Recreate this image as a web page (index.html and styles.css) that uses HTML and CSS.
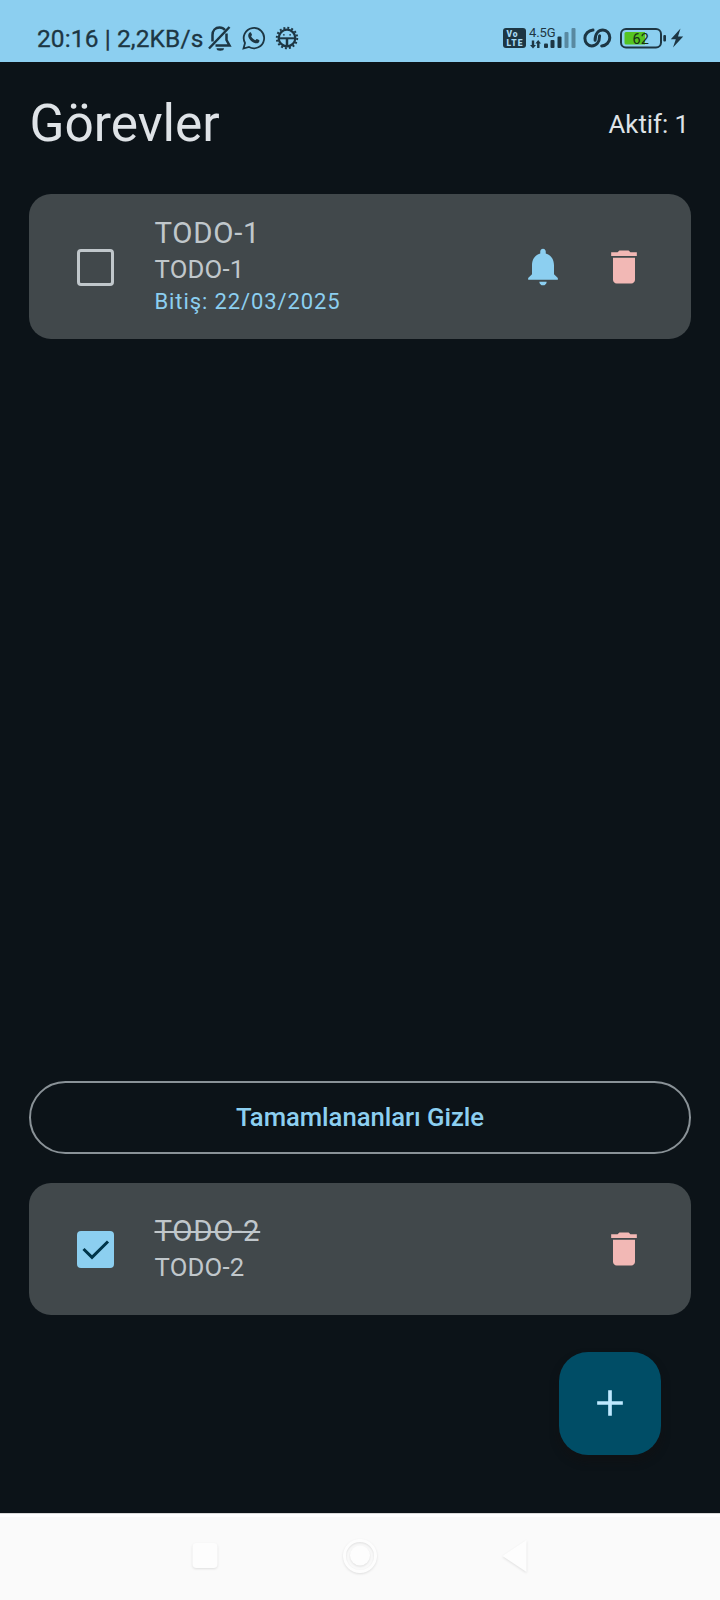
FILE: index.html
```html
<!DOCTYPE html>
<html lang="tr">
<head>
<meta charset="utf-8">
<title>Görevler</title>
<link rel="stylesheet" href="styles.css">
</head>
<body>
<div class="screen">
  <header class="status">
    <span class="clock">20:16 | 2,2KB/s</span>
    <svg class="st-mute" width="26" height="28" viewBox="0 0 26 28" fill="none" stroke="currentColor" stroke-width="2.5">
      <path d="M2 24.500 22.500 3"/>
      <path d="M5.500 17.500V11C5.500 6.500 8.500 3.500 12.500 3.500 15 3.500 16.800 4.500 18 6"/>
      <path d="M19.500 9.500V16l3 5.400H8.500"/>
      <path d="M9.500 24.200h7.500a3.700 2.500 0 0 1-7.500 0z" fill="currentColor" stroke="none"/>
    </svg>
    <svg class="st-wa" width="24" height="24" viewBox="0 0 24 24">
      <path d="M1.500 22.500 3 17a10.200 10.200 0 1 1 4 4z" fill="none" stroke="currentColor" stroke-width="1.800"/>
      <path d="M7.300 6.700c.5-.6 1.500-.7 1.800 0l.9 2c.2.5-.7 1.300-.9 1.600.9 1.900 2.300 3.100 4.300 3.900.4-.3 1-1.500 1.500-1.300l2.200 1.100c.6.3.2 1.900-.4 2.500-1.400 1.300-3.400.9-5.300 0-2.300-1.100-4-3-4.900-5.200-.6-1.700-.3-3.500.8-4.600z" fill="currentColor"/>
    </svg>
    <svg class="st-gear" width="24" height="24" viewBox="0 0 24 24" fill="none" stroke="currentColor">
      <circle cx="12" cy="12" r="8.300" stroke-width="2.200"/>
      <circle cx="12" cy="12" r="10.200" stroke-width="2" stroke-dasharray="2 2.006"/>
      <path d="M4 12.300h16" stroke-width="2"/>
      <path d="M12 13v7" stroke-width="2.500"/>
      <path d="M8 8.800h1.700M14.300 8.800H16" stroke-width="1.200"/>
    </svg>
    <svg class="st-volte" width="23" height="20" viewBox="0 0 23 20">
      <rect width="23" height="20" rx="3" fill="currentColor"/>
      <text x="3.500" y="9" class="volte-text" textLength="11">Vo</text>
      <text x="3.500" y="17.500" class="volte-text" textLength="16">LTE</text>
    </svg>
    <svg class="st-signal" width="49" height="24" viewBox="0 0 49 24" fill="currentColor">
      <text x="0" y="11.500" class="net-text" textLength="26.500">4.5G</text>
      <path d="M5.200 15.500v4.500h1.800l-3 3.500-3-3.500h1.800v-4.500zM10.500 23v-4.500h1.500L9.200 15 6.400 18.500h1.700V23z"/>
      <rect x="15" y="18.500" width="4" height="4.500" rx="1"/>
      <rect x="21.500" y="15" width="4" height="8" rx="1"/>
      <rect x="28.500" y="11.500" width="4" height="11.500" rx="1"/>
      <g opacity=".45"><rect x="35.500" y="7" width="4" height="16" rx="1"/><rect x="42.500" y="3" width="4" height="20" rx="1"/></g>
    </svg>
    <svg class="st-link" width="29" height="20" viewBox="0 0 29 20" fill="none" stroke="currentColor" stroke-width="3" stroke-linecap="round">
      <path d="M10 2C5.500 2.300 1.900 5.800 1.900 10.300 1.900 14.600 4.900 17.900 8.800 17.900 13.200 17.900 16.600 14.500 16.600 7.800"/>
      <path d="M18.700 18C23.200 17.700 26.800 14.200 26.800 9.700 26.800 5.400 23.800 2.100 19.900 2.100 15.500 2.100 12.100 5.500 12.100 12.200"/>
    </svg>
    <svg class="st-battery" width="47" height="21" viewBox="0 0 47 21">
      <rect x="1" y="1" width="40" height="18.500" rx="5" fill="none" stroke="currentColor" stroke-width="2"/>
      <path d="M6 4h19v12.500H6a1.500 1.500 0 0 1-1.500-1.500V5.500A1.500 1.500 0 0 1 6 4z" fill="#55c421"/>
      <rect x="43.300" y="7" width="2.700" height="6.500" rx="1" fill="currentColor"/>
      <text x="12.500" y="15.800" class="battery-text" textLength="16.500">62</text>
    </svg>
    <svg class="st-bolt" width="14" height="20" viewBox="0 0 14 20"><path d="M10.500.5.800 11.300h5L3 19.500 13.200 8.500H8z" fill="currentColor"/></svg>
  </header>

  <main class="app">
    <div class="title-row">
      <h1 class="title">Görevler</h1>
      <span class="active-count">Aktif: 1</span>
    </div>

    <article class="card card-active">
      <span class="checkbox"></span>
      <div class="task">
        <div class="task-title">TODO-1</div>
        <div class="task-note">TODO-1</div>
        <div class="task-due">Bitiş: 22/03/2025</div>
      </div>
      <svg class="icon bell" viewBox="0 0 24 24"><path d="M12 22c1.100 0 2-.9 2-2h-4c0 1.100.9 2 2 2zM18 16v-5c0-3.070-1.640-5.640-4.500-6.320V3.600c0-.83-.67-1.500-1.500-1.500s-1.500.67-1.500 1.500v1.080C7.630 5.360 6 7.920 6 11v5l-2.100 2v1h16.200v-1z"/></svg>
      <svg class="icon trash" viewBox="0 0 24 24"><path d="M6 19c0 1.100.9 2 2 2h8c1.100 0 2-.9 2-2V7H6v12zM19 4h-3.500l-1-1h-5l-1 1H5v2h14V4z"/></svg>
    </article>

    <div class="spacer"></div>

    <button class="toggle">Tamamlananları Gizle</button>

    <article class="card card-done">
      <span class="checkbox checked">
        <svg width="37" height="37" viewBox="0 0 37 37" fill="none" stroke="#00354a" stroke-width="3"><path d="M6.500 18 15 26.300 31 10.500"/></svg>
      </span>
      <div class="task">
        <div class="task-title done">TODO-2</div>
        <div class="task-note">TODO-2</div>
      </div>
      <svg class="icon trash" viewBox="0 0 24 24"><path d="M6 19c0 1.100.9 2 2 2h8c1.100 0 2-.9 2-2V7H6v12zM19 4h-3.500l-1-1h-5l-1 1H5v2h14V4z"/></svg>
    </article>

    <button class="fab" aria-label="Ekle">
      <svg width="44" height="44" viewBox="0 0 24 24" fill="#bee9ff"><path d="M19 13h-6v6h-2v-6H5v-2h6V5h2v6h6z"/></svg>
    </button>
  </main>

  <nav class="navbar">
    <svg class="nav-icon" width="40" height="44" viewBox="0 0 40 44"><rect x="7.500" y="9" width="25" height="25" rx="4"/></svg>
    <svg class="nav-icon" width="40" height="44" viewBox="0 0 40 44"><path fill-rule="evenodd" d="M20 5a17 17 0 1 0 0 34 17 17 0 0 0 0-34zm0 3a14 14 0 1 1 0 28 14 14 0 0 1 0-28z"/><circle cx="20" cy="21.500" r="10"/></svg>
    <svg class="nav-icon" width="40" height="44" viewBox="0 0 40 44"><path d="M7.500 22 31.500 6v32z"/></svg>
  </nav>
</div>
</body>
</html>
```
FILE: styles.css
```css
* { box-sizing: border-box; }

body {
  margin: 0;
  background: #0c1318;
  font-family: Roboto, "Liberation Sans", sans-serif;
}

.screen {
  width: 720px;
  height: 1600px;
  display: flex;
  flex-direction: column;
  overflow: hidden;
}

.status {
  height: 62px;
  flex: none;
  display: flex;
  align-items: flex-start;
  padding-left: 37px;
  background: #8ccff0;
  color: #1d3643;
}

.status svg { flex: none; }

.clock {
  width: 170px;
  margin-top: 25px;
  font-size: 24.500px;
  line-height: 28px;
  font-weight: 400;
  letter-spacing: .1px;
  -webkit-text-stroke: .3px currentColor;
  white-space: nowrap;
}

.st-mute { margin-top: 24px; }
.st-wa { margin: 26px 0 0 9px; }
.st-gear { margin: 26px 0 0 8.500px; }
.st-volte { margin: 28px 0 0 auto; }
.st-signal { margin: 25px 0 0 3px; }
.st-link { margin: 28px 0 0 5px; }
.st-battery { margin: 28px 0 0 8px; }
.st-bolt { margin: 28px 36px 0 3px; }

.volte-text { font-size: 8.500px; font-weight: 900; fill: #a8daf3; }
.net-text { font-size: 13px; }
.battery-text { font-size: 14.500px; font-weight: 400; fill: #173018; }

.app {
  flex: 1;
  display: flex;
  flex-direction: column;
  padding: 0 29px;
  background: #0c1318;
}

.title-row {
  height: 132px;
  flex: none;
  display: flex;
  align-items: center;
  justify-content: space-between;
  padding: 0 2px 8px 0.500px;
  color: #dfe3e7;
}

.title {
  margin: 0;
  font-size: 51.400px;
  line-height: 66px;
  font-weight: 400;
}

.active-count {
  font-size: 25.700px;
  letter-spacing: 0;
}

.card {
  flex: none;
  display: flex;
  align-items: center;
  padding: 0 45px 0 48px;
  border-radius: 22px;
  background: #41484b;
}

.card-active { height: 145px; }
.card-done { height: 132px; margin-top: 29px; }

.checkbox {
  width: 37px;
  height: 37px;
  flex: none;
  border: 3.700px solid #c0c7cb;
  border-radius: 4px;
}

.card-active .checkbox { margin-top: 1px; }

.checkbox.checked {
  border: 0;
  background: #8ccff0;
}

.checkbox svg { display: block; }

.task {
  flex: 1;
  padding: 0 0 2px 40.500px;
  color: #c0c7cb;
}

.task-title {
  font-size: 29.400px;
  line-height: 38px;
  letter-spacing: .7px;
}

.task-title.done { text-decoration: line-through; }

.task-note {
  font-size: 25.700px;
  line-height: 34px;
  letter-spacing: .2px;
}

.task-due {
  font-size: 22px;
  line-height: 31.600px;
  letter-spacing: .9px;
  color: #8ccff0;
}

.icon {
  width: 44px;
  height: 44px;
  flex: none;
}

.bell { fill: #8ccff0; margin-right: 37px; }
.trash { fill: #f2b8b5; }

.spacer { flex: 1; }

.toggle {
  height: 73px;
  flex: none;
  padding: 0 0 1px;
  border: 2px solid #8a9297;
  border-radius: 37px;
  background: none;
  color: #8ccff0;
  font: 500 25.700px Roboto, "Liberation Sans", sans-serif;
  letter-spacing: -.05px;
}

.fab {
  width: 102.500px;
  height: 103px;
  flex: none;
  align-self: flex-end;
  margin: 37px 30px 58px 0;
  padding: 0 0 1px 0;
  display: grid;
  place-items: center;
  border: 0;
  border-radius: 29px;
  background: #004d66;
  box-shadow: 0 6px 10px rgba(20, 16, 16, .45);
}

.navbar {
  height: 87px;
  flex: none;
  display: flex;
  justify-content: center;
  gap: 115px;
  padding: 20px 1px 0 0;
  background: #fafafa;
  border-top: 1px solid #d8d8d8;
  box-shadow: inset 0 3px 0 #fff;
}

.nav-icon {
  fill: #fdfdfd;
  filter: drop-shadow(0 1px 1px rgba(0, 0, 0, .11));
}
```
